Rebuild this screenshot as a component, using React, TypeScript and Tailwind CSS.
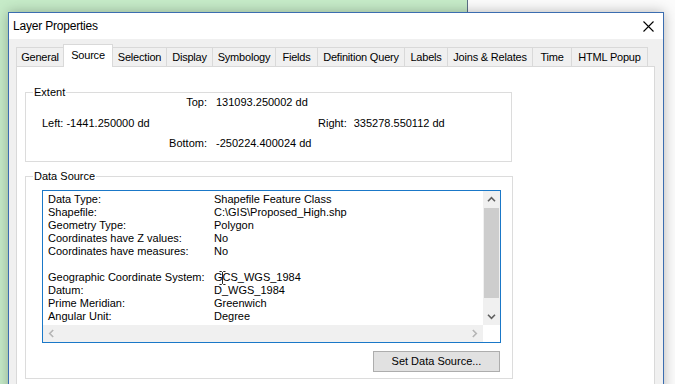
import React from "react";

const tabs = [
  { label: "General", w: "w-[48px]" },
  { label: "Source", w: "w-[50px]", active: true },
  { label: "Selection", w: "w-[54px]" },
  { label: "Display", w: "w-[46px]" },
  { label: "Symbology", w: "w-[63px]" },
  { label: "Fields", w: "w-[42px]" },
  { label: "Definition Query", w: "w-[87px]" },
  { label: "Labels", w: "w-[43px]" },
  { label: "Joins & Relates", w: "w-[85px]" },
  { label: "Time", w: "w-[39px]" },
  { label: "HTML Popup", w: "w-[76px]" },
];

const rows: [string, string][] = [
  ["Data Type:", "Shapefile Feature Class"],
  ["Shapefile:", "C:\\GIS\\Proposed_High.shp"],
  ["Geometry Type:", "Polygon"],
  ["Coordinates have Z values:", "No"],
  ["Coordinates have measures:", "No"],
  ["", ""],
  ["Geographic Coordinate System:", "GCS_WGS_1984"],
  ["Datum:", "D_WGS_1984"],
  ["Prime Meridian:", "Greenwich"],
  ["Angular Unit:", "Degree"],
];

const Chevron = ({ dir, color }: { dir: "up" | "down" | "left" | "right"; color: string }) => {
  const rot = { up: 0, right: 90, down: 180, left: 270 }[dir];
  return (
    <svg width="9" height="9" viewBox="0 0 9 9" style={{ transform: `rotate(${rot}deg)` }}>
      <path d="M1 6.2 L4.5 2.7 L8 6.2" fill="none" stroke={color} strokeWidth="1.6" />
    </svg>
  );
};

export default function App() {
  return (
    <div className="relative w-[675px] h-[384px] overflow-hidden bg-[#fbfbfb] font-['Liberation_Sans',Arial,sans-serif] text-black">
      {/* window behind */}
      <div className="absolute left-0 top-0 w-[468px] h-[384px] bg-[#c6ebc8] border-r border-[#5b6f86]" />

      {/* dialog */}
      <div className="absolute left-[8px] top-[12px] w-[656px] h-[400px] border border-[#3b6db0] bg-[#f0f0f0] shadow-[0_0_12px_rgba(0,0,0,0.28)] flex flex-col">
        {/* title bar */}
        <div className="h-[26px] bg-white flex items-center justify-between pl-[4px] pr-[9px]">
          <span className="text-[12px] tracking-[-0.2px]">Layer Properties</span>
          <svg width="11" height="11" viewBox="0 0 11 11">
            <path d="M0.5 0.5 L10.5 10.5 M10.5 0.5 L0.5 10.5" stroke="#000" strokeWidth="1.1" />
          </svg>
        </div>

        {/* client area */}
        <div className="flex-1 flex flex-col pt-[5px] pl-[7px]">
          {/* tab strip */}
          <div className="flex items-end h-[22px]">
            {tabs.map((t, i) =>
              t.active ? (
                <div
                  key={t.label}
                  className={`${t.w} -ml-px h-[23px] -mb-px relative z-10 bg-white border-t border-l border-r border-[#d9d9d9] flex items-center justify-center text-[11px] tracking-[-0.2px] pb-[2px]`}
                >
                  {t.label}
                </div>
              ) : (
                <div
                  key={t.label}
                  className={`${t.w} h-[19px] bg-[#f0f0f0] border-t border-r border-[#d9d9d9] ${i === 0 ? "border-l" : ""} flex items-center justify-center text-[11px] tracking-[-0.2px] whitespace-nowrap`}
                >
                  {t.label}
                </div>
              )
            )}
          </div>

          {/* tab page */}
          <div className="w-[639px] flex-1 bg-white border border-[#d9d9d9] pt-[19px] pl-[8px] text-[11px] leading-[13px]">
            {/* Extent */}
            <fieldset className="w-[487px] border border-[#dcdcdc] pb-[11px]">
              <legend className="ml-[7px] px-[1px] leading-[13px]">Extent</legend>
              <div className="-mt-[3px] flex flex-col">
                <div className="flex">
                  <span className="w-[181px] text-right">Top:</span>
                  <span className="ml-[9px]">131093.250002 dd</span>
                </div>
                <div className="flex mt-[8px]">
                  <span className="w-[292px] pl-[16px]">Left: -1441.250000 dd</span>
                  <span>Right:</span>
                  <span className="ml-[7px]">335278.550112 dd</span>
                </div>
                <div className="flex mt-[7px]">
                  <span className="w-[181px] text-right">Bottom:</span>
                  <span className="ml-[9px]">-250224.400024 dd</span>
                </div>
              </div>
            </fieldset>

            {/* Data Source */}
            <fieldset className="mt-[8px] w-[487px] border border-[#dcdcdc] pb-[6px]">
              <legend className="ml-[7px] px-[1px] leading-[13px]">Data Source</legend>
              <div className="flex flex-col pl-[16px] pr-[11px]">
                <div className="relative mt-[7px] w-[459px] h-[153px] border border-[#1a78c8] bg-white grid grid-cols-[1fr_17px] grid-rows-[1fr_17px]">
                  <div className="overflow-hidden pl-[5px] pt-[2px]">
                    {rows.map(([k, v], i) => (
                      <div key={i} className="flex h-[13px] whitespace-nowrap">
                        <span className="w-[166px]">{k}</span>
                        <span>{v}</span>
                      </div>
                    ))}
                  </div>
                  {/* vertical scrollbar */}
                  <div className="bg-[#f0f0f0] flex flex-col items-center">
                    <div className="h-[17px] flex items-center justify-center">
                      <Chevron dir="up" color="#606060" />
                    </div>
                    <div className="w-[15px] h-[90px] bg-[#cdcdcd]" />
                    <div className="flex-1 flex items-end pb-[4px]">
                      <Chevron dir="down" color="#606060" />
                    </div>
                  </div>
                  {/* horizontal scrollbar */}
                  <div className="bg-[#f0f0f0] flex items-center justify-between px-[4px]">
                    <Chevron dir="left" color="#b5b5b5" />
                    <Chevron dir="right" color="#b5b5b5" />
                  </div>
                  <div className="bg-white" />
                  {/* mouse I-beam */}
                  <svg className="absolute left-[176px] top-[80px]" width="7" height="14" viewBox="0 0 7 14">
                    <path d="M0.5 0.5 H2.5 L3.5 1.5 L4.5 0.5 H6.5 M3.5 1.5 V12.5 M0.5 13.5 H2.5 L3.5 12.5 L4.5 13.5 H6.5" fill="none" stroke="#222" strokeWidth="1" />
                  </svg>
                </div>
                <button className="self-end mr-[1px] mt-[8px] w-[127px] h-[21px] bg-[#e1e1e1] border border-[#adadad] text-[11px]">
                  Set Data Source...
                </button>
              </div>
            </fieldset>
          </div>
        </div>
      </div>
    </div>
  );
}
